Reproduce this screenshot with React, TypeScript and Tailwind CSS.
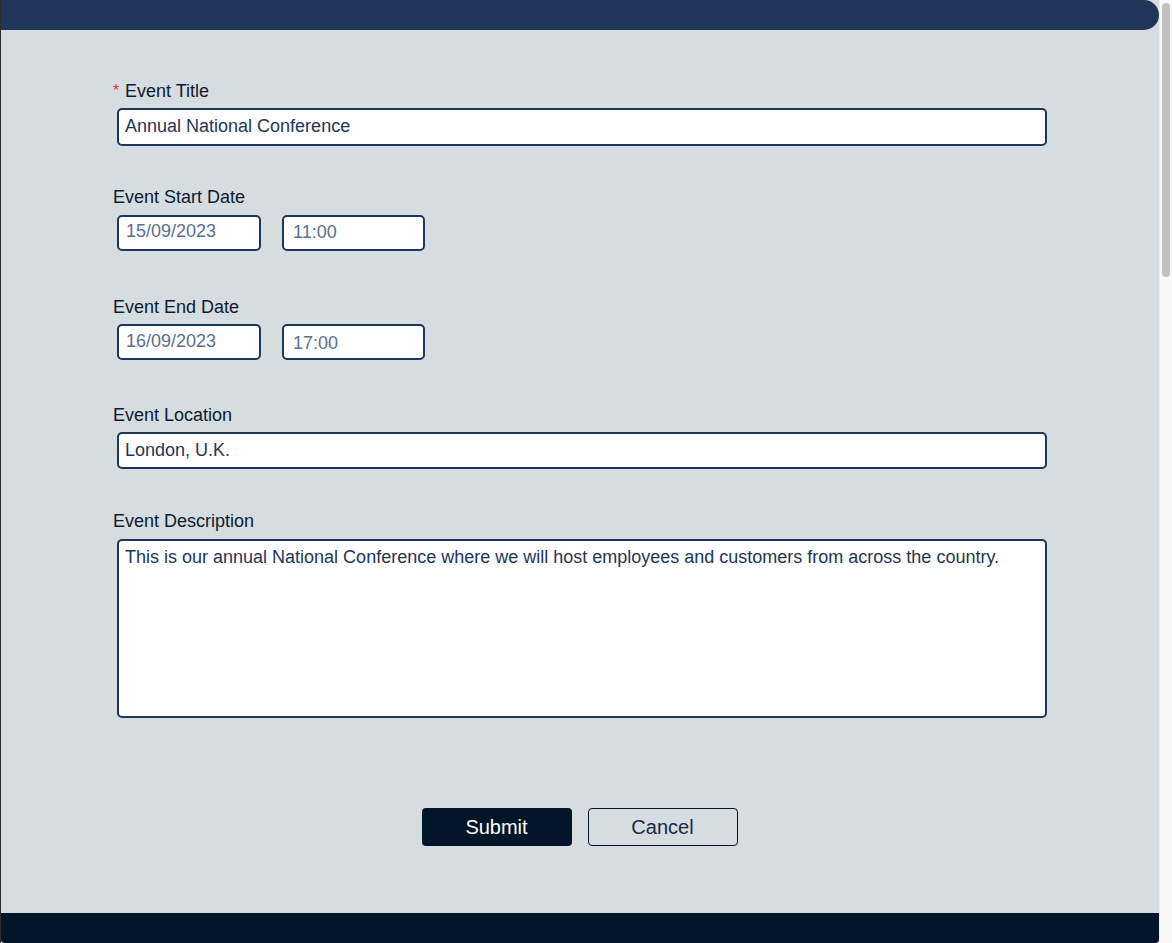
import React from "react";

const font = { fontFamily: '"Liberation Sans", Arial, sans-serif' };

function Label({ children }: { children: React.ReactNode }) {
  return <div className="h-[20px] text-[18px] leading-[20px] text-[#0f1b2d]">{children}</div>;
}

export default function App() {
  return (
    <div className="flex h-[943px] w-[1172px] overflow-hidden bg-[#f8f8f8]" style={font}>
      <div className="flex w-[1159px] flex-col border-l border-[#2e2e2e] bg-[#d6dde1]">
        <div className="h-[30px] rounded-r-[15px] bg-[#1f3559]" />
        <div className="flex flex-1 flex-col pl-[112px] pt-[51px]">
          <div className="flex h-[20px] text-[18px] leading-[20px] text-[#0f1b2d]">
            <span className="inline-block w-[12px] text-[16px] text-[#e8323c]">*</span>
            <span>Event Title</span>
          </div>
          <div className="ml-[4px] mt-[7px] h-[38px] w-[930px] rounded-[5px] border-2 border-[#1f3559] bg-white pl-[6px] pt-[6px] text-[18px] leading-[20px] text-[#1f3559]">
            Annual National Conference
          </div>

          <div className="mt-[41px]">
            <Label>Event Start Date</Label>
          </div>
          <div className="ml-[4px] mt-[8px] flex gap-[21px]">
            <div className="h-[36px] w-[144px] rounded-[5px] border-2 border-[#1f3559] bg-white pl-[7px] pt-[4px] text-[18px] leading-[20px] text-[#5b6f8d]">
              15/09/2023
            </div>
            <div className="h-[36px] w-[143px] rounded-[5px] border-2 border-[#1f3559] bg-white pl-[9px] pt-[5px] text-[18px] leading-[20px] text-[#5b6f8d]">
              11:00
            </div>
          </div>

          <div className="mt-[46px]">
            <Label>Event End Date</Label>
          </div>
          <div className="ml-[4px] mt-[7px] flex gap-[21px]">
            <div className="h-[36px] w-[144px] rounded-[5px] border-2 border-[#1f3559] bg-white pl-[7px] pt-[5px] text-[18px] leading-[20px] text-[#5b6f8d]">
              16/09/2023
            </div>
            <div className="h-[36px] w-[143px] rounded-[5px] border-2 border-[#1f3559] bg-white pl-[9px] pt-[7px] text-[18px] leading-[20px] text-[#5b6f8d]">
              17:00
            </div>
          </div>

          <div className="mt-[45px]">
            <Label>Event Location</Label>
          </div>
          <div className="ml-[4px] mt-[7px] h-[37px] w-[930px] rounded-[5px] border-2 border-[#1f3559] bg-white pl-[6px] pt-[6px] text-[18px] leading-[20px] text-[#1f3559]">
            London, U.K.
          </div>

          <div className="mt-[42px]">
            <Label>Event Description</Label>
          </div>
          <div className="ml-[4px] mt-[8px] h-[179px] w-[930px] rounded-[5px] border-2 border-[#1f3559] bg-white pl-[6px] pt-[6px] text-[18px] leading-[20px] text-[#1f3559]">
            This is our annual National Conference where we will host employees and customers from across the country.
          </div>
        </div>
        <div className="flex justify-center gap-[16px] pb-[67px] pr-[1px]">
          <button className="h-[38px] w-[150px] rounded-[4px] bg-[#031529] text-[20px] text-white">
            Submit
          </button>
          <button className="h-[38px] w-[150px] rounded-[4px] border border-[#031529] text-[20px] text-[#1b2a44]">
            Cancel
          </button>
        </div>
        <div className="h-[30px] rounded-b-[4px] bg-[#031529]" />
      </div>
      <div className="flex w-[13px] justify-center border-l border-[#ececec] pt-[3px]">
        <div className="h-[274px] w-[8px] rounded-full bg-[#c1c1c1]" />
      </div>
    </div>
  );
}
